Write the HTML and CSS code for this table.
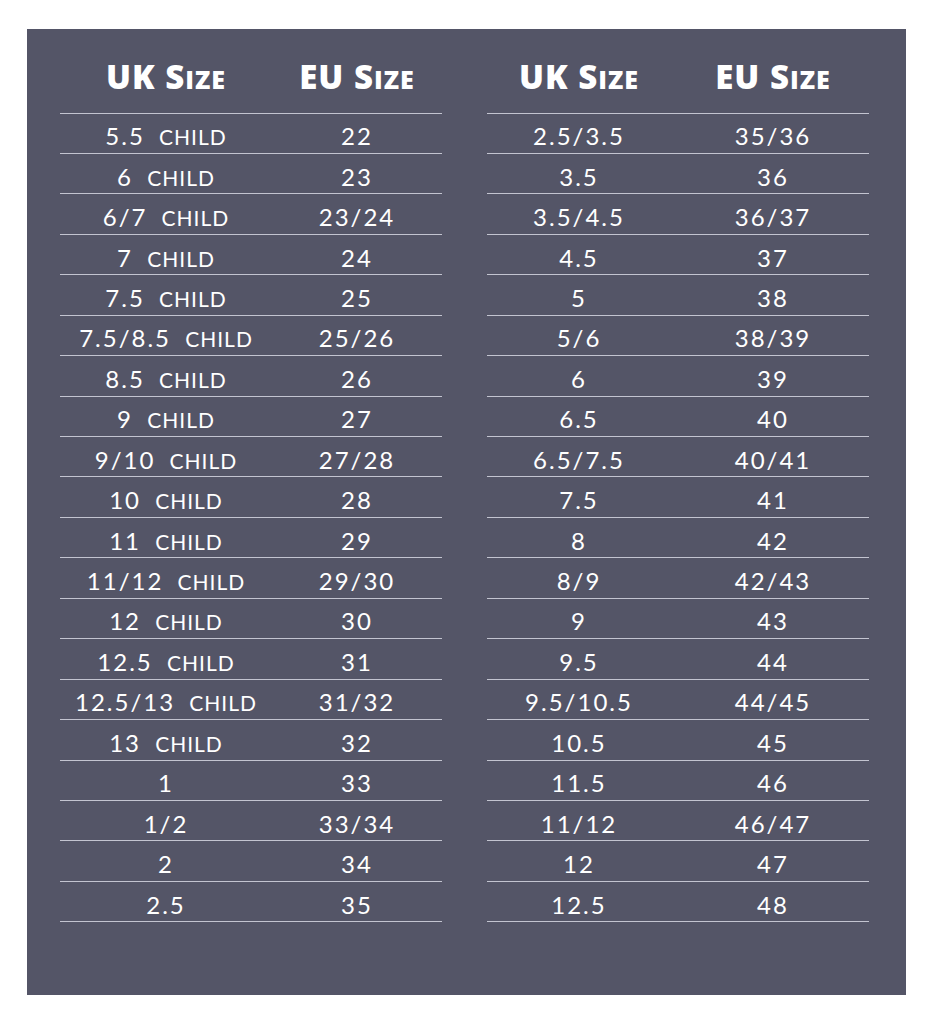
FILE: index.html
```html
<!DOCTYPE html>
<html>
<head>
<meta charset="utf-8">
<link rel="stylesheet" href="styles.css">
</head>
<body>
<div class="panel">
  <div class="table left">
    <div class="head"><span class="c1">UK S<span class="sc">ize</span></span><span class="c2">EU S<span class="sc">ize</span></span></div>
    <div class="row"><span class="c1">5.5 <small>CHILD</small></span><span class="c2">22</span></div>
    <div class="row"><span class="c1">6 <small>CHILD</small></span><span class="c2">23</span></div>
    <div class="row"><span class="c1">6/7 <small>CHILD</small></span><span class="c2">23/24</span></div>
    <div class="row"><span class="c1">7 <small>CHILD</small></span><span class="c2">24</span></div>
    <div class="row"><span class="c1">7.5 <small>CHILD</small></span><span class="c2">25</span></div>
    <div class="row"><span class="c1">7.5/8.5 <small>CHILD</small></span><span class="c2">25/26</span></div>
    <div class="row"><span class="c1">8.5 <small>CHILD</small></span><span class="c2">26</span></div>
    <div class="row"><span class="c1">9 <small>CHILD</small></span><span class="c2">27</span></div>
    <div class="row"><span class="c1">9/10 <small>CHILD</small></span><span class="c2">27/28</span></div>
    <div class="row"><span class="c1">10 <small>CHILD</small></span><span class="c2">28</span></div>
    <div class="row"><span class="c1">11 <small>CHILD</small></span><span class="c2">29</span></div>
    <div class="row"><span class="c1">11/12 <small>CHILD</small></span><span class="c2">29/30</span></div>
    <div class="row"><span class="c1">12 <small>CHILD</small></span><span class="c2">30</span></div>
    <div class="row"><span class="c1">12.5 <small>CHILD</small></span><span class="c2">31</span></div>
    <div class="row"><span class="c1">12.5/13 <small>CHILD</small></span><span class="c2">31/32</span></div>
    <div class="row"><span class="c1">13 <small>CHILD</small></span><span class="c2">32</span></div>
    <div class="row"><span class="c1">1</span><span class="c2">33</span></div>
    <div class="row"><span class="c1">1/2</span><span class="c2">33/34</span></div>
    <div class="row"><span class="c1">2</span><span class="c2">34</span></div>
    <div class="row"><span class="c1">2.5</span><span class="c2">35</span></div>
  </div>
  <div class="table right">
    <div class="head"><span class="c1">UK S<span class="sc">ize</span></span><span class="c2">EU S<span class="sc">ize</span></span></div>
    <div class="row"><span class="c1">2.5/3.5</span><span class="c2">35/36</span></div>
    <div class="row"><span class="c1">3.5</span><span class="c2">36</span></div>
    <div class="row"><span class="c1">3.5/4.5</span><span class="c2">36/37</span></div>
    <div class="row"><span class="c1">4.5</span><span class="c2">37</span></div>
    <div class="row"><span class="c1">5</span><span class="c2">38</span></div>
    <div class="row"><span class="c1">5/6</span><span class="c2">38/39</span></div>
    <div class="row"><span class="c1">6</span><span class="c2">39</span></div>
    <div class="row"><span class="c1">6.5</span><span class="c2">40</span></div>
    <div class="row"><span class="c1">6.5/7.5</span><span class="c2">40/41</span></div>
    <div class="row"><span class="c1">7.5</span><span class="c2">41</span></div>
    <div class="row"><span class="c1">8</span><span class="c2">42</span></div>
    <div class="row"><span class="c1">8/9</span><span class="c2">42/43</span></div>
    <div class="row"><span class="c1">9</span><span class="c2">43</span></div>
    <div class="row"><span class="c1">9.5</span><span class="c2">44</span></div>
    <div class="row"><span class="c1">9.5/10.5</span><span class="c2">44/45</span></div>
    <div class="row"><span class="c1">10.5</span><span class="c2">45</span></div>
    <div class="row"><span class="c1">11.5</span><span class="c2">46</span></div>
    <div class="row"><span class="c1">11/12</span><span class="c2">46/47</span></div>
    <div class="row"><span class="c1">12</span><span class="c2">47</span></div>
    <div class="row"><span class="c1">12.5</span><span class="c2">48</span></div>
  </div>
</div>
</body>
</html>
```

FILE: styles.css
```css
html, body {
  margin: 0;
  padding: 0;
  background: #ffffff;
}
.panel {
  margin: 29px 0 0 27px;
  width: 879px;
  height: 966px;
  box-sizing: border-box;
  background: #545567;
  display: flex;
  gap: 45px;
  padding-left: 33px;
  color: #ffffff;
  font-family: "Lato", "Liberation Sans", sans-serif;
}
.table {
  width: 382px;
  display: flex;
  flex-direction: column;
}
.head, .row {
  display: grid;
  box-sizing: border-box;
  border-bottom: 1px solid #c3c4d0;
  align-items: center;
  justify-items: center;
}
.left .head, .left .row {
  grid-template-columns: 212px 170px;
}
.right .head, .right .row {
  grid-template-columns: 184px 204px;
}
.head {
  height: 84.5px;
  padding-top: 12px;
  font-family: "Open Sans", "Lato", sans-serif;
  font-weight: 800;
  font-size: 33px;
  letter-spacing: 1px;
}
.head .sc {
  text-transform: uppercase;
  font-size: 0.76em;
  letter-spacing: 1px;
}
.row {
  height: 40.45px;
  padding-top: 5px;
  font-size: 24px;
  letter-spacing: 2px;
  white-space: pre;
}
.row small {
  font-size: 21px;
  margin-left: 6px;
  letter-spacing: 1px;
}
```
